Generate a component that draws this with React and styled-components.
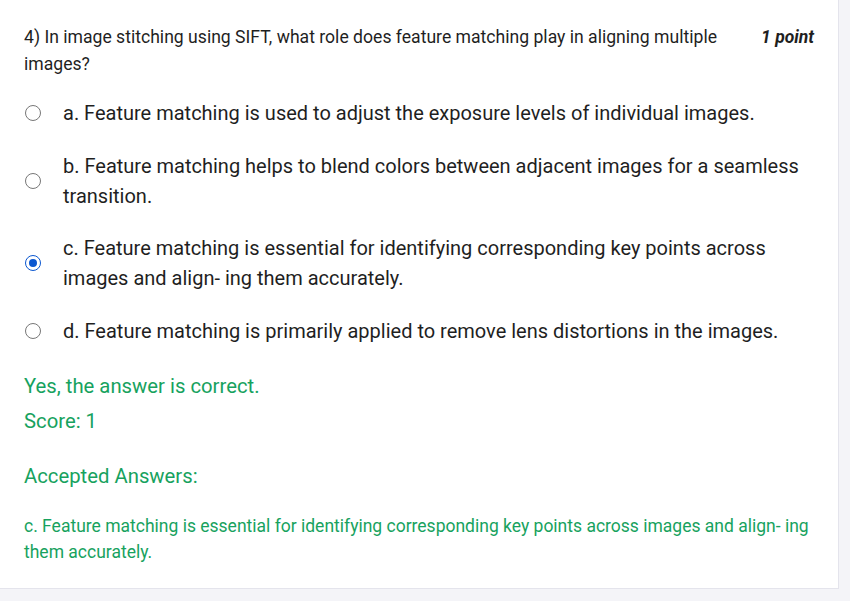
import React from "react";
import styled, { createGlobalStyle } from "styled-components";

const Global = createGlobalStyle`
  html, body { margin: 0; padding: 0; background: #f4f4f8; }
  body { font-family: Roboto, "Noto Sans", Arial, sans-serif; }
`;

const Page = styled.div`
  width: 850px;
  height: 601px;
  background: #f4f4f8;
`;

const Card = styled.div`
  width: 839px;
  height: 589px;
  box-sizing: border-box;
  background: #ffffff;
  border-right: 1px solid #e4e4ec;
  border-bottom: 1px solid #e4e4ec;
  padding: 24px 24px 0 24px;
`;

const Header = styled.div`
  display: flex;
  align-items: flex-start;
  gap: 20px;
`;

const Question = styled.div`
  flex: 1;
  font-size: 17.6px;
  line-height: 27px;
  color: #1f1f1f;
`;

const Points = styled.div`
  font-size: 17.5px;
  line-height: 27px;
  font-weight: 700;
  font-style: italic;
  color: #1f1f1f;
  white-space: nowrap;
`;

const Options = styled.div`
  display: flex;
  flex-direction: column;
  gap: 22.7px;
  margin-top: 20px;
`;

const Option = styled.label`
  display: flex;
  align-items: center;
  gap: 22px;
  padding-left: 1px;
`;

const Radio = styled.span`
  flex: none;
  width: 16px;
  height: 16px;
  box-sizing: border-box;
  border-radius: 50%;
  border: 1.5px solid ${(p) => (p.$checked ? "#0b57d0" : "#777")};
  display: flex;
  align-items: center;
  justify-content: center;
  &::after {
    content: "";
    width: 8px;
    height: 8px;
    border-radius: 50%;
    background: ${(p) => (p.$checked ? "#0b57d0" : "transparent")};
  }
`;

const OptionText = styled.span`
  font-size: 20px;
  line-height: 30px;
  color: #1f1f1f;
`;

const Feedback = styled.div`
  margin-top: 25px;
  color: #17a25e;
`;

const Big = styled.div`
  font-size: 20.3px;
  line-height: 30px;
  margin-top: ${(p) => p.$mt || 0}px;
`;

const Answer = styled.div`
  margin-top: 22px;
  font-size: 17.5px;
  line-height: 26px;
`;

const options = [
  { k: "a", t: "a. Feature matching is used to adjust the exposure levels of individual images." },
  { k: "b", t: "b. Feature matching helps to blend colors between adjacent images for a seamless transition." },
  { k: "c", t: "c. Feature matching is essential for identifying corresponding key points across images and align- ing them accurately.", checked: true },
  { k: "d", t: "d. Feature matching is primarily applied to remove lens distortions in the images." },
];

export default function App() {
  return (
    <Page>
      <Global />
      <Card>
        <Header>
          <Question>
            4) In image stitching using SIFT, what role does feature matching play in aligning multiple images?
          </Question>
          <Points>1 point</Points>
        </Header>
        <Options>
          {options.map((o) => (
            <Option key={o.k}>
              <Radio $checked={o.checked} />
              <OptionText>{o.t}</OptionText>
            </Option>
          ))}
        </Options>
        <Feedback>
          <Big>Yes, the answer is correct.</Big>
          <Big $mt={5}>Score: 1</Big>
          <Big $mt={25}>Accepted Answers:</Big>
          <Answer>
            c. Feature matching is essential for identifying corresponding key points across images and align- ing them accurately.
          </Answer>
        </Feedback>
      </Card>
    </Page>
  );
}
